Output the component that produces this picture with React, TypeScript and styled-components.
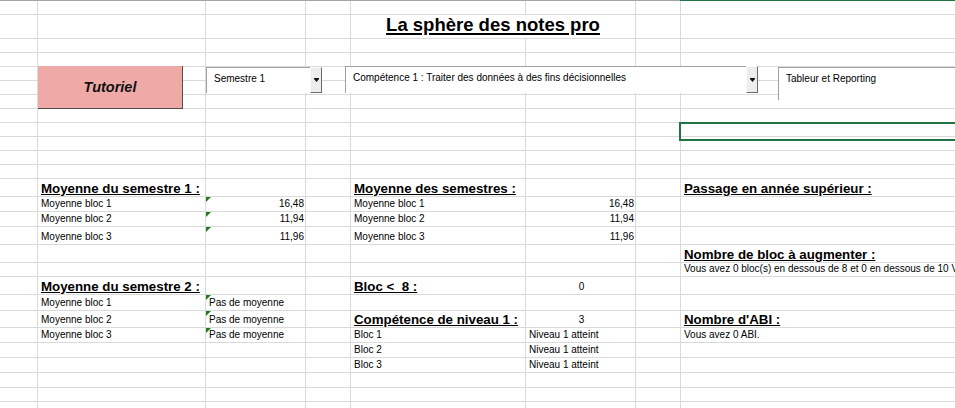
import React from "react";
import styled, { createGlobalStyle, css } from "styled-components";

const COLS = [38, 168, 100, 45, 175, 110, 45, 300];
const ROWS = [
  14, 24, 14, 14, 14, 14, 14, 14, 14, 14, 14, 14, 18, 15, 15, 18, 18, 14, 18, 16,
  17, 15, 15, 15, 15, 14, 14,
];
const GRID = "#dadada";
const FONT = `"Liberation Sans", Arial, sans-serif`;

const GlobalStyle = createGlobalStyle`
  html, body {
    margin: 0;
    padding: 0;
    background: #fff;
    overflow: hidden;
  }
  body {
    font-family: ${FONT};
    color: #000;
  }
`;

const Page = styled.div`
  width: 955px;
  height: 408px;
  overflow: hidden;
`;

const TopRule = styled.div`
  display: flex;
  height: 1px;
`;

const RuleSegment = styled.div<{ $green?: boolean; $w?: number }>`
  height: 1px;
  background: ${(p) => (p.$green ? "#217346" : "#a3a3a3")};
  ${(p) => (p.$w ? `width: ${p.$w}px;` : "flex: 1;")}
`;

const Sheet = styled.div`
  display: grid;
  grid-template-columns: ${COLS.map((w) => `${w}px`).join(" ")};
  grid-template-rows: ${ROWS.map((h) => `${h}px`).join(" ")};
`;

const GridCell = styled.div<{ $r: number; $c: number; $span?: number }>`
  grid-row: ${(p) => p.$r};
  grid-column: ${(p) => `${p.$c} / span ${p.$span ?? 1}`};
  border-right: 1px solid ${GRID};
  border-bottom: 1px solid ${GRID};
`;

const Title = styled(GridCell)`
  display: flex;
  align-items: flex-end;
  justify-content: center;
  padding-bottom: 3px;
  font-size: 18.5px;
  line-height: 20px;
  font-weight: 700;
  text-decoration: underline;
  text-decoration-thickness: 2px;
  text-underline-offset: 2px;
  white-space: nowrap;
`;

const Cell = styled.div<{
  $r: number;
  $c: number;
  $span?: number;
  $align?: "left" | "right" | "center";
  $flag?: boolean;
}>`
  grid-row: ${(p) => p.$r};
  grid-column: ${(p) => `${p.$c} / span ${p.$span ?? 1}`};
  position: relative;
  display: flex;
  align-items: flex-end;
  justify-content: ${(p) =>
    p.$align === "right" ? "flex-end" : p.$align === "center" ? "center" : "flex-start"};
  padding: 0 2px 2px 3px;
  font-size: 10px;
  line-height: 12px;
  white-space: pre;

  ${(p) =>
    p.$flag &&
    css`
      &::before {
        content: "";
        position: absolute;
        top: 0;
        left: 0;
        border-top: 5px solid #1c7c1c;
        border-right: 5px solid transparent;
      }
    `}
`;

const Heading = styled(Cell)`
  font-size: 13.3px;
  line-height: 15px;
  font-weight: 700;
  text-decoration: underline;
  text-underline-offset: 1px;
  padding-bottom: 1px;
`;

const TutorialButton = styled.button`
  grid-row: 5 / 8;
  grid-column: 2;
  align-self: start;
  justify-self: start;
  margin-top: -1px;
  width: 145px;
  height: 43px;
  padding: 0 0 1px 0;
  background: #efaaa7;
  border: none;
  border-right: 1px solid #4f4f4f;
  border-bottom: 1px solid #4f4f4f;
  font-family: ${FONT};
  font-size: 14.5px;
  font-style: italic;
  font-weight: 700;
  color: #111;
  position: relative;
`;

const Combo = styled.div<{ $col: string; $left: number; $top: number; $w: number; $h: number }>`
  grid-row: 5 / 8;
  grid-column: ${(p) => p.$col};
  align-self: start;
  justify-self: start;
  margin-left: ${(p) => p.$left}px;
  margin-top: ${(p) => p.$top}px;
  width: ${(p) => p.$w}px;
  height: ${(p) => p.$h}px;
  display: flex;
  position: relative;
`;

const ComboField = styled.div`
  flex: 1;
  min-width: 0;
  background: #fff;
  border-top: 1px solid #a0a0a0;
  border-left: 1px solid #a0a0a0;
  padding: 4px 0 0 7px;
  font-size: 10px;
  line-height: 13px;
  white-space: nowrap;
  overflow: hidden;
`;

const ComboButton = styled.div`
  width: 12px;
  box-sizing: border-box;
  background: #ededed;
  border-top: 1px solid #fafafa;
  border-left: 1px solid #fafafa;
  border-right: 1px solid #6a6a6a;
  border-bottom: 1px solid #6a6a6a;
  display: flex;
  align-items: center;
  justify-content: center;
`;

const InfoBox = styled.div`
  grid-row: 5 / 8;
  grid-column: 8;
  align-self: start;
  margin-left: 97px;
  height: 28px;
  background: #fff;
  border-top: 1px solid #a0a0a0;
  border-left: 1px solid #a0a0a0;
  padding: 4px 0 0 7px;
  font-size: 10px;
  line-height: 13px;
  white-space: nowrap;
  position: relative;
`;

const Selection = styled.div`
  grid-row: 9;
  grid-column: 8;
  align-self: start;
  justify-self: start;
  margin: -1px 0 0 -2px;
  width: 320px;
  height: 15px;
  border: 2px solid #217346;
  position: relative;
`;

const Arrow = () => (
  <svg width="5" height="4" viewBox="0 0 5 4">
    <rect x="0" y="0" width="5" height="1" fill="#111" />
    <polygon points="0,1 5,1 2.5,4" fill="#111" />
  </svg>
);

type Entry = {
  r: number;
  c: number;
  text: string;
  heading?: boolean;
  align?: "left" | "right" | "center";
  flag?: boolean;
};

const entries: Entry[] = [
  { r: 13, c: 2, text: "Moyenne du semestre 1 :", heading: true },
  { r: 14, c: 2, text: "Moyenne bloc 1" },
  { r: 14, c: 3, text: "16,48", align: "right", flag: true },
  { r: 15, c: 2, text: "Moyenne bloc 2" },
  { r: 15, c: 3, text: "11,94", align: "right", flag: true },
  { r: 16, c: 2, text: "Moyenne bloc 3" },
  { r: 16, c: 3, text: "11,96", align: "right", flag: true },

  { r: 13, c: 5, text: "Moyenne des semestres :", heading: true },
  { r: 14, c: 5, text: "Moyenne bloc 1" },
  { r: 14, c: 6, text: "16,48", align: "right" },
  { r: 15, c: 5, text: "Moyenne bloc 2" },
  { r: 15, c: 6, text: "11,94", align: "right" },
  { r: 16, c: 5, text: "Moyenne bloc 3" },
  { r: 16, c: 6, text: "11,96", align: "right" },

  { r: 13, c: 8, text: "Passage en année supérieur :", heading: true },
  { r: 17, c: 8, text: "Nombre de bloc à augmenter :", heading: true },
  { r: 18, c: 8, text: "Vous avez 0 bloc(s) en dessous de 8 et 0 en dessous de 10 V" },

  { r: 19, c: 2, text: "Moyenne du semestre 2 :", heading: true },
  { r: 20, c: 2, text: "Moyenne bloc 1" },
  { r: 20, c: 3, text: "Pas de moyenne", flag: true },
  { r: 21, c: 2, text: "Moyenne bloc 2" },
  { r: 21, c: 3, text: "Pas de moyenne", flag: true },
  { r: 22, c: 2, text: "Moyenne bloc 3" },
  { r: 22, c: 3, text: "Pas de moyenne", flag: true },

  { r: 19, c: 5, text: "Bloc <  8 :", heading: true },
  { r: 19, c: 6, text: "0", align: "center" },
  { r: 21, c: 5, text: "Compétence de niveau 1 :", heading: true },
  { r: 21, c: 6, text: "3", align: "center" },
  { r: 22, c: 5, text: "Bloc 1" },
  { r: 22, c: 6, text: "Niveau 1 atteint" },
  { r: 23, c: 5, text: "Bloc 2" },
  { r: 23, c: 6, text: "Niveau 1 atteint" },
  { r: 24, c: 5, text: "Bloc 3" },
  { r: 24, c: 6, text: "Niveau 1 atteint" },

  { r: 21, c: 8, text: "Nombre d'ABI :", heading: true },
  { r: 22, c: 8, text: "Vous avez 0 ABI." },
];

const App = () => {
  const background: React.ReactNode[] = [];
  ROWS.forEach((_, ri) => {
    COLS.forEach((__, ci) => {
      const r = ri + 1;
      const c = ci + 1;
      if (r === 2 && (c === 5 || c === 6)) return;
      background.push(<GridCell key={`${r}-${c}`} $r={r} $c={c} />);
    });
  });

  return (
    <>
      <GlobalStyle />
      <Page>
        <TopRule>
          <RuleSegment $w={680} />
          <RuleSegment $green />
        </TopRule>
        <Sheet>
          {background}
          <Title $r={2} $c={5} $span={2}>
            La sphère des notes pro
          </Title>

          <TutorialButton>Tutoriel</TutorialButton>

          <Combo $col="3 / 5" $left={0} $top={0} $w={116} $h={26}>
            <ComboField>Semestre 1</ComboField>
            <ComboButton>
              <Arrow />
            </ComboButton>
          </Combo>

          <Combo $col="4 / 9" $left={39} $top={-1} $w={413} $h={27}>
            <ComboField>Compétence 1 : Traiter des données à des fins décisionnelles</ComboField>
            <ComboButton>
              <Arrow />
            </ComboButton>
          </Combo>

          <InfoBox>Tableur et Reporting</InfoBox>

          <Selection />

          {entries.map((e, i) => {
            const Comp = e.heading ? Heading : Cell;
            return (
              <Comp key={i} $r={e.r} $c={e.c} $align={e.align} $flag={e.flag}>
                {e.text}
              </Comp>
            );
          })}
        </Sheet>
      </Page>
    </>
  );
};

export default App;
